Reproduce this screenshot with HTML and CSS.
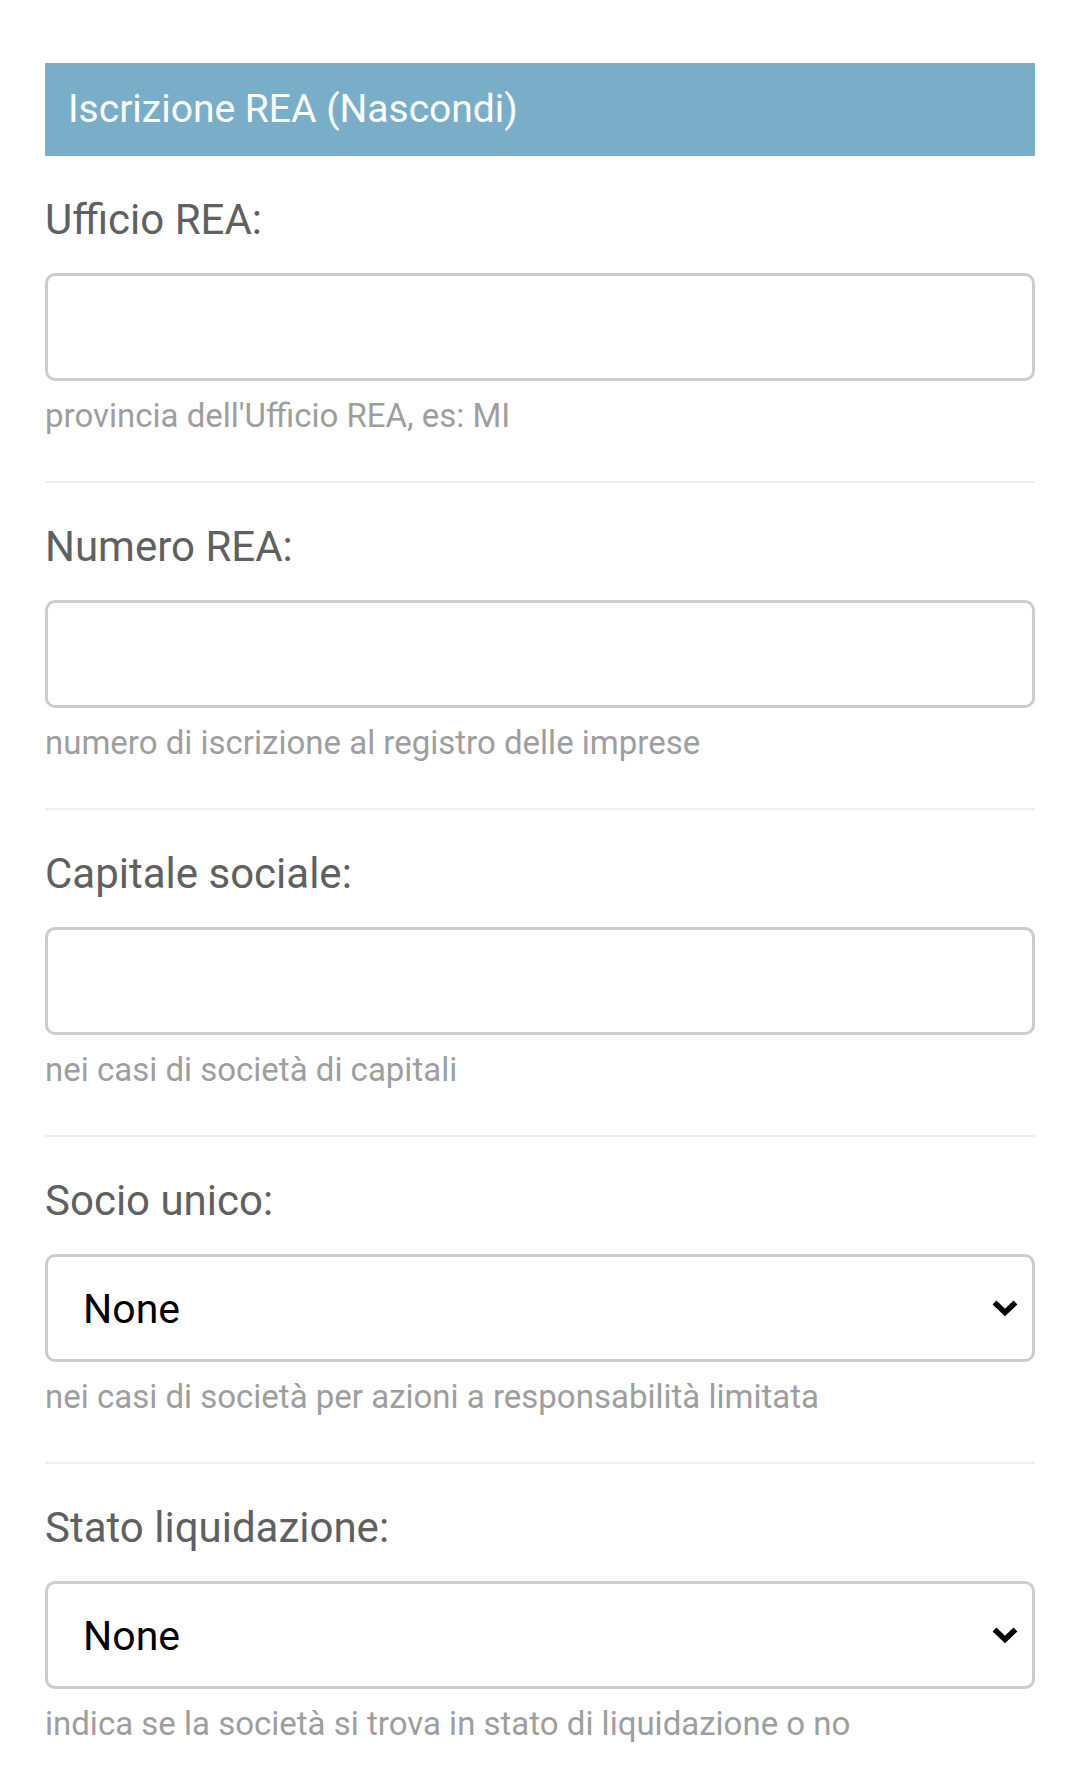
FILE: index.html
```html
<!DOCTYPE html>
<html lang="it">
<head>
<meta charset="utf-8">
<title>Iscrizione REA</title>
<link rel="stylesheet" href="styles.css">
</head>
<body>
<div class="page">
  <div class="section-header">Iscrizione REA (Nascondi)</div>

  <div class="field">
    <label class="field-label" for="ufficio">Ufficio REA:</label>
    <input class="field-input" id="ufficio" type="text">
    <div class="field-help">provincia dell'Ufficio REA, es: MI</div>
  </div>

  <div class="field">
    <label class="field-label" for="numero">Numero REA:</label>
    <input class="field-input" id="numero" type="text">
    <div class="field-help">numero di iscrizione al registro delle imprese</div>
  </div>

  <div class="field">
    <label class="field-label" for="capitale">Capitale sociale:</label>
    <input class="field-input" id="capitale" type="text">
    <div class="field-help">nei casi di società di capitali</div>
  </div>

  <div class="field">
    <label class="field-label" for="socio">Socio unico:</label>
    <div class="select-wrap">
      <select class="field-select" id="socio"><option>None</option></select>
      <svg class="chevron" width="28" height="18" viewBox="0 0 28 18"><polyline points="3.5,3.5 14,13.5 24.5,3.5" fill="none" stroke="#000" stroke-width="5.5"/></svg>
    </div>
    <div class="field-help">nei casi di società per azioni a responsabilità limitata</div>
  </div>

  <div class="field last">
    <label class="field-label" for="stato">Stato liquidazione:</label>
    <div class="select-wrap">
      <select class="field-select" id="stato"><option>None</option></select>
      <svg class="chevron" width="28" height="18" viewBox="0 0 28 18"><polyline points="3.5,3.5 14,13.5 24.5,3.5" fill="none" stroke="#000" stroke-width="5.5"/></svg>
    </div>
    <div class="field-help">indica se la società si trova in stato di liquidazione o no</div>
  </div>
</div>
</body>
</html>
```

FILE: styles.css
```css
html, body {
  margin: 0;
  padding: 0;
  background: #ffffff;
}

body {
  font-family: Roboto, "Liberation Sans", Arial, sans-serif;
}

.page {
  width: 990px;
  padding: 63px 45px 0;
}

.section-header {
  height: 93px;
  line-height: 93px;
  background: #78aec8;
  color: #ffffff;
  font-size: 39px;
  padding-left: 23px;
}

.field {
  display: flex;
  flex-direction: column;
  padding: 39px 0 45.4px;
  border-bottom: 2px solid #eeeeee;
}

.field.last {
  border-bottom: none;
}

.field-label {
  font-size: 42px;
  line-height: 49px;
  color: #606060;
  margin-bottom: 29px;
}

.field-input,
.field-select {
  display: block;
  box-sizing: border-box;
  width: 100%;
  height: 108px;
  border: 3px solid #cccccc;
  border-radius: 10px;
  background: #ffffff;
  margin: 0;
  outline: none;
}

.field-select {
  -webkit-appearance: none;
  appearance: none;
  font-family: Roboto, "Liberation Sans", Arial, sans-serif;
  font-size: 41px;
  color: #000000;
  padding: 2px 0 0 35px;
}

.select-wrap {
  position: relative;
}

.chevron {
  position: absolute;
  right: 16px;
  top: 45px;
}

.field-help {
  margin-top: 15px;
  font-size: 33px;
  line-height: 39.6px;
  color: #9e9e9e;
}
```
